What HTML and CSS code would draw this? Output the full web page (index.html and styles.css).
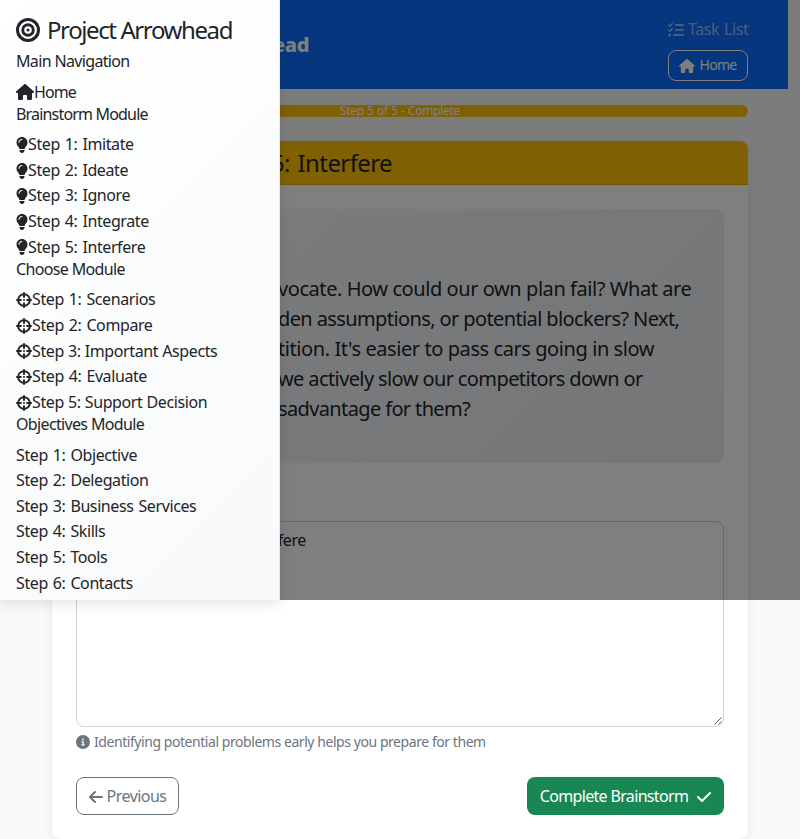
FILE: index.html
```
<!DOCTYPE html>
<html lang="en">
<head>
<meta charset="utf-8">
<title>Project Arrowhead</title>
<link rel="stylesheet" href="styles.css">
</head>
<body>
<svg width="0" height="0" class="sprite">
  <symbol id="house" viewBox="0 0 576 512"><path d="M575.8 255.5c0 18-15 32.1-32 32.1h-32l.7 160.2c0 2.7-.2 5.4-.5 8.1V472c0 22.1-17.9 40-40 40H456c-1.1 0-2.2 0-3.3-.1c-1.4 .1-2.8 .1-4.2 .1H416 392c-22.1 0-40-17.9-40-40V448 384c0-17.7-14.3-32-32-32H256c-17.7 0-32 14.3-32 32v64 24c0 22.1-17.9 40-40 40H160 128.1c-1.5 0-3-.1-4.5-.2c-1.2 .1-2.4 .2-3.6 .2H104c-22.1 0-40-17.9-40-40V360c0-.9 0-1.9 .1-2.8V287.6H32c-18 0-32-14-32-32.1c0-9 3-17 10-24L266.4 8c7-7 15-8 22-8s15 2 21 7L564.8 231.5c8 7 12 15 11 24z"/></symbol>
  <symbol id="bulb" viewBox="0 0 384 512"><path d="M272 384c9.6-31.9 29.5-59.1 49.2-86.2l0 0c5.2-7.1 10.4-14.2 15.4-21.4c19.8-28.5 31.4-63 31.4-100.3C368 78.8 289.2 0 192 0S16 78.8 16 176c0 37.3 11.6 71.9 31.4 100.3c5 7.2 10.2 14.3 15.4 21.4l0 0c19.8 27.1 39.7 54.4 49.2 86.2H272zM192 512c44.2 0 80-35.8 80-80V416H112v16c0 44.2 35.8 80 80 80zM112 176c0 8.8-7.2 16-16 16s-16-7.2-16-16c0-61.9 50.1-112 112-112c8.8 0 16 7.2 16 16s-7.2 16-16 16c-44.2 0-80 35.8-80 80z"/></symbol>
  <symbol id="cross" viewBox="0 0 512 512"><g fill="none" stroke="currentColor" stroke-width="64" stroke-linecap="round"><circle cx="256" cy="256" r="188"/><path d="M256 32v124M256 356v124M32 256h124M356 256h124"/></g><circle cx="256" cy="256" r="32"/></symbol>
  <symbol id="bullseye" viewBox="0 0 512 512"><g fill="none" stroke="currentColor" stroke-width="64"><circle cx="256" cy="256" r="224"/><circle cx="256" cy="256" r="112"/></g><circle cx="256" cy="256" r="32"/></symbol>
  <symbol id="tasks" viewBox="0 0 512 512"><g fill="none" stroke="currentColor" stroke-linecap="round" stroke-linejoin="round"><path stroke-width="48" d="M24 96l40 36 72-80M24 256l40 36 72-80"/><path stroke-width="64" d="M256 96h224M256 256h224M192 416h288"/></g><circle cx="48" cy="416" r="48"/></symbol>
  <symbol id="info" viewBox="0 0 512 512"><path fill-rule="evenodd" d="M256 512A256 256 0 1 0 256 0a256 256 0 1 0 0 512zM216 336h24V272H216c-13.300 0-24-10.700-24-24s10.700-24 24-24h48c13.300 0 24 10.700 24 24v88h8c13.300 0 24 10.700 24 24s-10.700 24-24 24H216c-13.300 0-24-10.700-24-24s10.700-24 24-24zm40-208a32 32 0 1 1 0 64 32 32 0 1 1 0-64z"/></symbol>
  <symbol id="arrow" viewBox="0 0 448 512"><path fill="none" stroke="currentColor" stroke-width="64" stroke-linecap="round" stroke-linejoin="round" d="M416 256H32M192 96L32 256l160 160"/></symbol>
  <symbol id="check" viewBox="0 0 448 512"><path fill="none" stroke="currentColor" stroke-width="64" stroke-linecap="round" stroke-linejoin="round" d="M416 128L160 384 32 256"/></symbol>
</svg>

<header class="topbar">
  <div class="brand">ead</div>
  <nav class="topnav">
    <a class="tasklist"><svg class="i16"><use href="#tasks"/></svg><span>Task List</span></a>
    <a class="homebtn"><svg class="i-home"><use href="#house"/></svg><span>Home</span></a>
  </nav>
</header>

<main class="container">
  <div class="progress"><span>Step 5 of 5 - Complete</span></div>
  <section class="card">
    <h1 class="card-head"><span class="head-text">5: Interfere</span></h1>
    <div class="card-body">
      <div class="prompt">
        <div class="l1">vocate. How could our own plan fail? What are</div>
        <div class="l2">den assumptions, or potential blockers? Next,</div>
        <div class="l3">tition. It's easier to pass cars going in slow</div>
        <div class="l4">we actively slow our competitors down or</div>
        <div class="l5">sadvantage for them?</div>
      </div>
      <div class="answer"><span class="answer-text">fere</span>
        <svg class="grip" viewBox="0 0 8 8"><path d="M0.500 7.500L7.500 0.500M4.500 7.500L7.500 4.500" stroke="#555" fill="none"/></svg>
      </div>
      <p class="help"><svg class="i14"><use href="#info"/></svg><span>Identifying potential problems early helps you prepare for them</span></p>
      <div class="actions">
        <a class="btn prev"><svg class="i-arrow"><use href="#arrow"/></svg><span>Previous</span></a>
        <a class="btn done"><span>Complete Brainstorm</span><svg class="i-arrow"><use href="#check"/></svg></a>
      </div>
    </div>
  </section>
</main>

<div class="backdrop"></div>
<aside class="sidebar">
  <h2 class="side-title"><svg class="i-bull"><use href="#bullseye"/></svg><span>Project Arrowhead</span></h2>
  <h3>Main Navigation</h3>
  <ul><li class="home"><svg class="i-house"><use href="#house"/></svg><span>Home</span></li></ul>
  <h3 class="tight">Brainstorm Module</h3>
  <ul>
    <li><svg class="i-bulb"><use href="#bulb"/></svg><span>Step 1: Imitate</span></li>
    <li><svg class="i-bulb"><use href="#bulb"/></svg><span>Step 2: Ideate</span></li>
    <li><svg class="i-bulb"><use href="#bulb"/></svg><span>Step 3: Ignore</span></li>
    <li><svg class="i-bulb"><use href="#bulb"/></svg><span>Step 4: Integrate</span></li>
    <li><svg class="i-bulb"><use href="#bulb"/></svg><span>Step 5: Interfere</span></li>
  </ul>
  <h3>Choose Module</h3>
  <ul>
    <li><svg class="i16"><use href="#cross"/></svg><span>Step 1: Scenarios</span></li>
    <li><svg class="i16"><use href="#cross"/></svg><span>Step 2: Compare</span></li>
    <li class="long"><svg class="i16"><use href="#cross"/></svg><span>Step 3: Important Aspects</span></li>
    <li><svg class="i16"><use href="#cross"/></svg><span>Step 4: Evaluate</span></li>
    <li class="long"><svg class="i16"><use href="#cross"/></svg><span>Step 5: Support Decision</span></li>
  </ul>
  <h3>Objectives Module</h3>
  <ul>
    <li><span>Step 1: Objective</span></li>
    <li><span>Step 2: Delegation</span></li>
    <li><span>Step 3: Business Services</span></li>
    <li><span>Step 4: Skills</span></li>
    <li><span>Step 5: Tools</span></li>
    <li><span>Step 6: Contacts</span></li>
  </ul>
</aside>
</body>
</html>
```
FILE: styles.css
```
* { box-sizing: border-box; }
html, body { margin: 0; height: 839px; overflow: hidden; }
body {
  background: #f8f9fa;
  color: #212529;
  font: 16px/1.6 "Noto Sans", sans-serif;
  letter-spacing: -0.4px;
  white-space: nowrap;
}
h1, h2, h3, p, ul { margin: 0; padding: 0; font-weight: 400; list-style: none; }
svg { fill: currentColor; flex: none; }
.sprite { position: absolute; }
.i16 { width: 16px; height: 16px; }
.i14 { width: 14px; height: 14px; }
.i-house { width: 18px; height: 16px; }
.i-bulb { width: 12px; height: 16px; }
.i-bull { width: 24px; height: 24px; }
.i-home { width: 16px; height: 14px; }
.i-arrow { width: 14px; height: 16px; }

.topbar {
  width: 788px;
  height: 89px;
  padding: 0 40px 0 52px;
  background: #0d6efd;
  color: #fff;
  display: flex;
  align-items: center;
  justify-content: space-between;
}
.brand { width: 257px; text-align: right; font-size: 20px; font-weight: 800; }
.topnav { width: 80px; display: flex; flex-direction: column; gap: 7px; padding-top: 8px; }
.tasklist { display: flex; align-items: center; gap: 4px; height: 26px; padding-top: 1px; color: rgba(255,255,255,.55); word-spacing: 1px; }
.homebtn {
  height: 31px;
  border: 1px solid #fff;
  border-radius: 8px;
  display: flex;
  align-items: center;
  justify-content: center;
  gap: 4px;
  padding-top: 1px;
  font-size: 14px;
  letter-spacing: -0.7px;
}

.container { width: 696px; margin: 16px auto 0; }
.progress {
  height: 12px;
  border-radius: 6px;
  background: #ffc107;
  color: #fff;
  font-size: 12px;
  line-height: 12px;
  letter-spacing: -0.3px;
  word-spacing: 0.5px;
  text-align: center;
}
.card {
  height: 698px;
  margin-top: 24px;
  background: #fff;
  border-radius: 8px;
  box-shadow: 0 2px 10px rgba(0,0,0,.08);
  overflow: hidden;
}
.card-head {
  height: 44px;
  background: #ffc107;
  border-bottom: 1px solid #e0a800;
  font-size: 24px;
  line-height: 43px;
  letter-spacing: -0.6px;
  word-spacing: 2px;
}
.head-text { display: block; width: 340px; text-align: right; }
.card-body { padding: 24px; }
.prompt {
  height: 254px;
  padding: 65px 0 0 202px;
  border-radius: 8px;
  background: linear-gradient(135deg, #f8f9fa, #e9ecef);
  font-size: 20px;
  line-height: 30px;
}
.l1 { letter-spacing: -0.43px; }
.l2 { letter-spacing: -0.61px; }
.l3 { letter-spacing: -0.42px; }
.l4 { letter-spacing: -0.61px; }
.l5 { letter-spacing: -0.63px; }
.answer {
  position: relative;
  height: 206px;
  margin-top: 58px;
  border: 1px solid #ced4da;
  border-radius: 8px;
  padding: 6px 0;
}
.answer-text { display: block; width: 229px; text-align: right; }
.grip { position: absolute; right: 1px; bottom: 1px; width: 8px; height: 8px; }
.help { display: flex; align-items: center; gap: 4px; height: 22px; margin-top: 4px; color: #6c757d; font-size: 14px; letter-spacing: -0.44px; }
.actions { display: flex; justify-content: space-between; margin-top: 24px; }
.btn { height: 38px; border-radius: 8px; display: flex; align-items: center; justify-content: center; padding-top: 1px; }
.prev { width: 103px; gap: 4px; border: 1px solid #6c757d; color: #6c757d; letter-spacing: -0.55px; }
.done { width: 197px; gap: 9px; background: #198754; color: #fff; letter-spacing: -0.66px; }

.backdrop { position: absolute; left: 0; top: 0; width: 800px; height: 600px; background: rgba(0,0,0,.5); }
.sidebar {
  position: absolute;
  left: 0;
  top: 0;
  width: 280px;
  height: 600px;
  padding: 15.500px 16px 0;
  background: linear-gradient(135deg, #fff, #f8f9fa);
  border-right: 1px solid #e9ecef;
  box-shadow: 0 4px 12px rgba(0,0,0,.1);
  overflow: hidden;
}
.side-title { display: flex; align-items: center; gap: 7px; font-size: 24px; line-height: 28.800px; margin-bottom: 8px; letter-spacing: -1.4px; }
.sidebar h3 { font-size: 16px; line-height: 19.200px; margin-bottom: 8px; letter-spacing: -0.65px; }
.sidebar h3.tight { letter-spacing: -0.82px; }
.sidebar li { display: flex; align-items: center; height: 25.600px; word-spacing: 1.2px; }
.sidebar li.home { letter-spacing: -0.9px; }
.sidebar li.long { word-spacing: 0.4px; }
```
